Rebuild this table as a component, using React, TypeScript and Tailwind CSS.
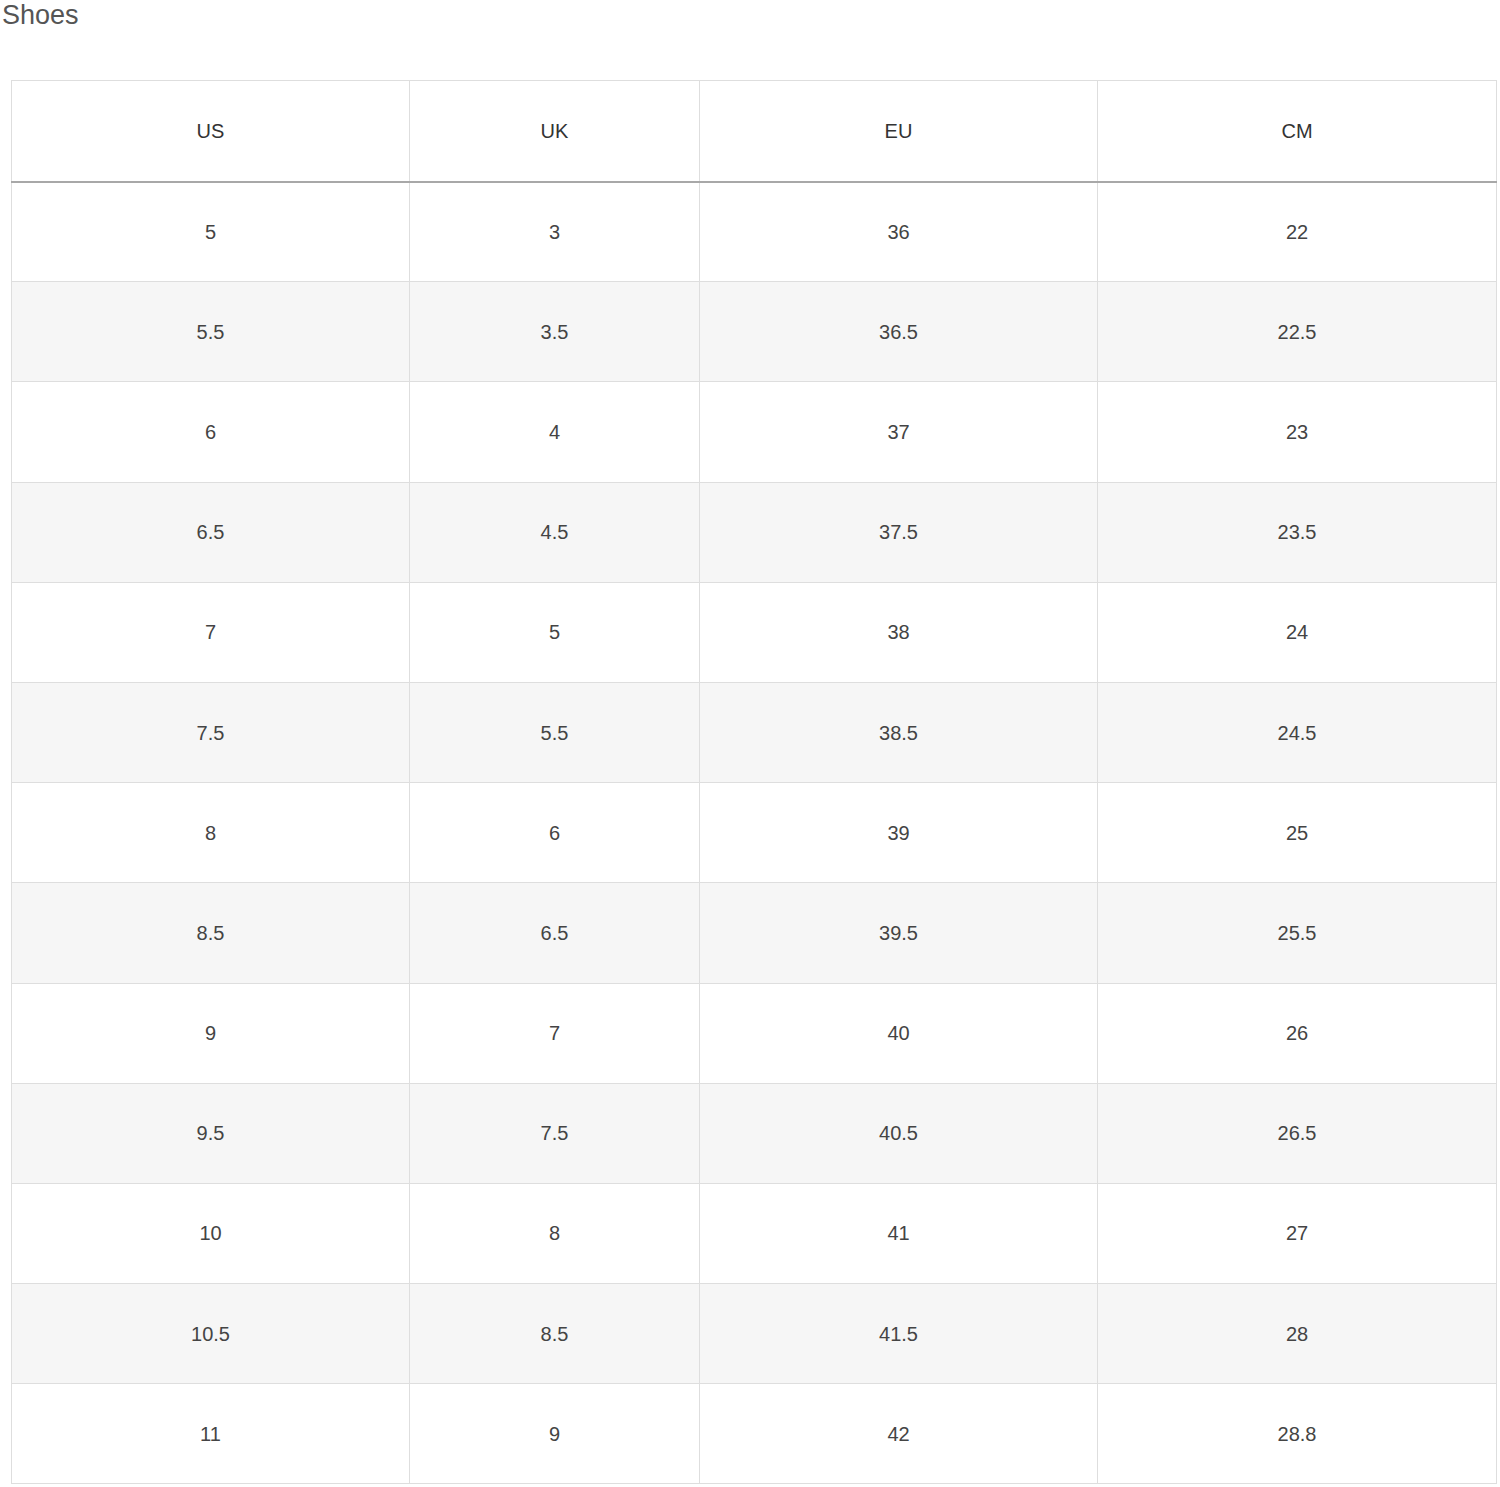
import React from 'react';

const rows: string[][] = [
  ['5', '3', '36', '22'],
  ['5.5', '3.5', '36.5', '22.5'],
  ['6', '4', '37', '23'],
  ['6.5', '4.5', '37.5', '23.5'],
  ['7', '5', '38', '24'],
  ['7.5', '5.5', '38.5', '24.5'],
  ['8', '6', '39', '25'],
  ['8.5', '6.5', '39.5', '25.5'],
  ['9', '7', '40', '26'],
  ['9.5', '7.5', '40.5', '26.5'],
  ['10', '8', '41', '27'],
  ['10.5', '8.5', '41.5', '28'],
  ['11', '9', '42', '28.8'],
];

const headers = ['US', 'UK', 'EU', 'CM'];

export default function App() {
  return (
    <div className="w-[1500px] h-[1487px] bg-white font-['Liberation_Sans',Arial,sans-serif] text-[#444]">
      <h2 className="pl-[2px] text-[27px] leading-none pt-[2px] text-[#555]">Shoes</h2>
      <table className="ml-[11px] mt-[51px] w-[1485px] table-fixed border-collapse text-center text-[20px]">
        <colgroup>
          <col className="w-[398px]" />
          <col className="w-[290px]" />
          <col className="w-[398px]" />
          <col className="w-[399px]" />
        </colgroup>
        <thead>
          <tr className="h-[101px]">
            {headers.map((h) => (
              <th key={h} className="border border-[#dedede] border-b-2 border-b-[#a8a8a8] font-normal text-[#333]">
                {h}
              </th>
            ))}
          </tr>
        </thead>
        <tbody>
          {rows.map((r, i) => (
            <tr key={i} className={i % 2 === 1 ? 'h-[100.2px] bg-[#f6f6f6]' : 'h-[100.2px] bg-white'}>
              {r.map((c, j) => (
                <td key={j} className="border border-[#dedede]">
                  {c}
                </td>
              ))}
            </tr>
          ))}
        </tbody>
      </table>
    </div>
  );
}
